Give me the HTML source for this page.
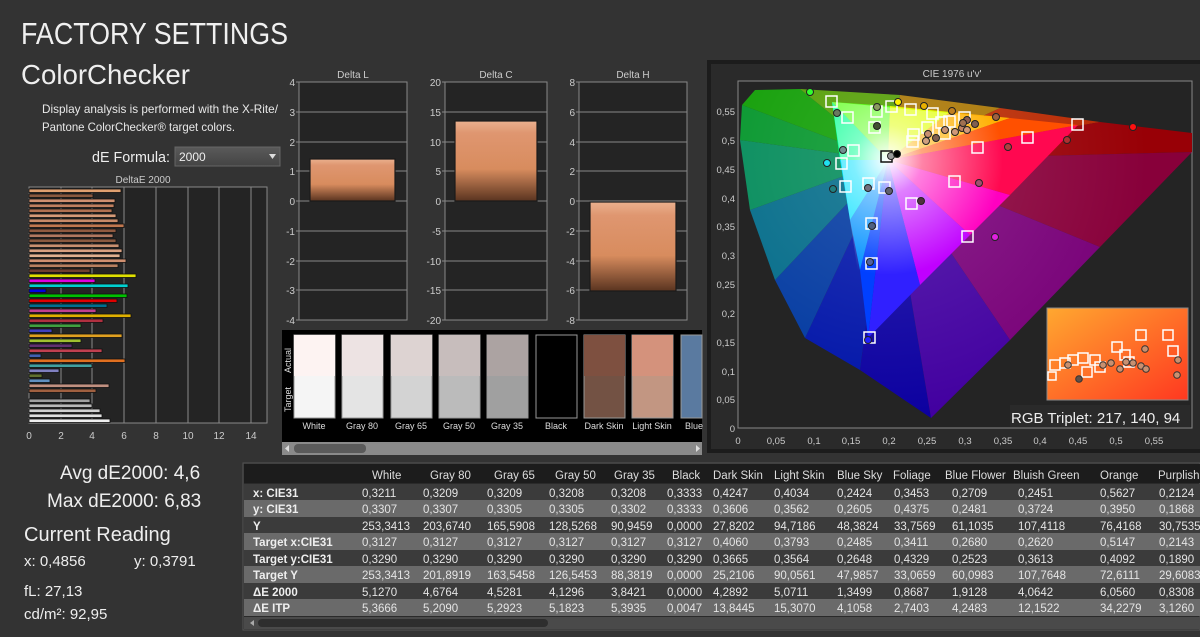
<!DOCTYPE html>
<html><head><meta charset="utf-8"><style>
html,body{margin:0;padding:0;background:#333;}
svg{display:block;}
text{font-family:"Liberation Sans",sans-serif;}
</style></head><body>
<svg width="1200" height="637" viewBox="0 0 1200 637" xmlns="http://www.w3.org/2000/svg">
<defs>
<radialGradient id="wr" gradientUnits="userSpaceOnUse" cx="888" cy="160" r="115">
<stop offset="0" stop-color="#fff" stop-opacity="1"/><stop offset="0.3" stop-color="#fff" stop-opacity="0.5"/><stop offset="1" stop-color="#fff" stop-opacity="0"/></radialGradient>
<radialGradient id="wo" gradientUnits="userSpaceOnUse" cx="888" cy="160" r="260">
<stop offset="0" stop-color="#fff" stop-opacity="0.15"/><stop offset="1" stop-color="#fff" stop-opacity="0"/></radialGradient>
<linearGradient id="bar" x1="0" y1="0" x2="0" y2="1"><stop offset="0" stop-color="#eab08e"/><stop offset="0.15" stop-color="#df9670"/><stop offset="0.6" stop-color="#d88c5e"/><stop offset="1" stop-color="#5a3420"/></linearGradient>
<linearGradient id="ins" x1="0" y1="0" x2="1" y2="1"><stop offset="0" stop-color="#ffa830"/><stop offset="1" stop-color="#ff3820"/></linearGradient>
<linearGradient id="sel" x1="0" y1="0" x2="0" y2="1"><stop offset="0" stop-color="#5a5a5a"/><stop offset="1" stop-color="#444"/></linearGradient>
</defs>
<rect width="1200" height="637" fill="#333"/>

<text x="21" y="44" font-size="31" fill="#f0f0f0" textLength="267" lengthAdjust="spacingAndGlyphs">FACTORY SETTINGS</text>
<text x="21" y="84" font-size="28" fill="#eee" textLength="169" lengthAdjust="spacingAndGlyphs">ColorChecker</text>
<text x="42" y="113" font-size="12" fill="#e8e8e8" textLength="236" lengthAdjust="spacingAndGlyphs">Display analysis is performed with the X-Rite/</text>
<text x="42" y="131" font-size="12" fill="#e8e8e8" textLength="193" lengthAdjust="spacingAndGlyphs">Pantone ColorChecker® target colors.</text>
<text x="92" y="162" font-size="15" fill="#eee" textLength="78" lengthAdjust="spacingAndGlyphs">dE Formula:</text>
<rect x="175" y="147" width="105" height="19" fill="url(#sel)" stroke="#666"/>
<text x="179" y="161" font-size="12" fill="#eee">2000</text>
<path d="M269 154 L276 154 L272.5 159 Z" fill="#ddd"/>

<text x="143" y="183" font-size="10" fill="#ccc" text-anchor="middle">DeltaE 2000</text>
<rect x="29" y="187" width="238" height="236" fill="#242424" stroke="#888"/>
<g stroke="#8a8a8a" stroke-width="1">
<line x1="61" y1="187" x2="61" y2="423"/><line x1="92" y1="187" x2="92" y2="423"/><line x1="124" y1="187" x2="124" y2="423"/><line x1="156" y1="187" x2="156" y2="423"/><line x1="188" y1="187" x2="188" y2="423"/><line x1="219" y1="187" x2="219" y2="423"/><line x1="251" y1="187" x2="251" y2="423"/>
</g>
<g font-size="10" fill="#ccc" text-anchor="middle">
<text x="29" y="439">0</text><text x="61" y="439">2</text><text x="92" y="439">4</text><text x="124" y="439">6</text><text x="156" y="439">8</text><text x="188" y="439">10</text><text x="219" y="439">12</text><text x="251" y="439">14</text></g>
<g stroke="#111" stroke-width="0.8">
<rect x="29" y="189" width="92" height="3.5" fill="#e0a070"/>
<rect x="29" y="194" width="64" height="3.5" fill="#8a5a40"/>
<rect x="29" y="199" width="86" height="3.5" fill="#d09070"/>
<rect x="29" y="204" width="85" height="3.5" fill="#c08060"/>
<rect x="29" y="209" width="83" height="3.5" fill="#b07050"/>
<rect x="29" y="214" width="87" height="3.5" fill="#d59a78"/>
<rect x="29" y="219" width="89" height="3.5" fill="#c88a68"/>
<rect x="29" y="224" width="95" height="3.5" fill="#c07850"/>
<rect x="29" y="229" width="87" height="3.5" fill="#905a40"/>
<rect x="29" y="234" width="84" height="3.5" fill="#b07860"/>
<rect x="29" y="239" width="87" height="3.5" fill="#8a5a40"/>
<rect x="29" y="244" width="90" height="3.5" fill="#c89070"/>
<rect x="29" y="249" width="93" height="3.5" fill="#d8a080"/>
<rect x="29" y="254" width="91" height="3.5" fill="#e0b090"/>
<rect x="29" y="259" width="97" height="3.5" fill="#d09070"/>
<rect x="29" y="264" width="89" height="3.5" fill="#b88060"/>
<rect x="29" y="269" width="61" height="3.5" fill="#704030"/>
<rect x="29" y="274" width="107" height="3.5" fill="#e0e000"/>
<rect x="29" y="279" width="66" height="3.5" fill="#e000e0"/>
<rect x="29" y="284" width="99" height="3.5" fill="#00d0d0"/>
<rect x="29" y="289" width="17" height="3.5" fill="#0000e0"/>
<rect x="29" y="294" width="98" height="3.5" fill="#00c000"/>
<rect x="29" y="299" width="88" height="3.5" fill="#e00000"/>
<rect x="29" y="304" width="78" height="3.5" fill="#007090"/>
<rect x="29" y="309" width="67" height="3.5" fill="#c04090"/>
<rect x="29" y="314" width="102" height="3.5" fill="#e0b000"/>
<rect x="29" y="319" width="74" height="3.5" fill="#b03040"/>
<rect x="29" y="324" width="52" height="3.5" fill="#40a040"/>
<rect x="29" y="329" width="23" height="3.5" fill="#4040c0"/>
<rect x="29" y="334" width="93" height="3.5" fill="#e0a020"/>
<rect x="29" y="339" width="52" height="3.5" fill="#a0c030"/>
<rect x="29" y="344" width="43" height="3.5" fill="#603070"/>
<rect x="29" y="349" width="73" height="3.5" fill="#c04050"/>
<rect x="29" y="354" width="12" height="3.5" fill="#4060b0"/>
<rect x="29" y="359" width="96" height="3.5" fill="#e07020"/>
<rect x="29" y="364" width="63" height="3.5" fill="#40a0a0"/>
<rect x="29" y="369" width="30" height="3.5" fill="#8080c0"/>
<rect x="29" y="374" width="13" height="3.5" fill="#607030"/>
<rect x="29" y="379" width="21" height="3.5" fill="#6090c0"/>
<rect x="29" y="384" width="80" height="3.5" fill="#c09080"/>
<rect x="29" y="389" width="67" height="3.5" fill="#a06040"/>
<rect x="29" y="399" width="61" height="3.5" fill="#a0a0a0"/>
<rect x="29" y="404" width="63" height="3.5" fill="#b8b8b8"/>
<rect x="29" y="409" width="71" height="3.5" fill="#d0d0d0"/>
<rect x="29" y="414" width="73" height="3.5" fill="#e0e0e0"/>
<rect x="29" y="419" width="81" height="3.5" fill="#f0f0f0"/>
</g>

<text x="60" y="479" font-size="19" fill="#eee">Avg dE2000: 4,6</text>
<text x="47" y="507" font-size="19" fill="#eee">Max dE2000: 6,83</text>
<text x="24" y="541" font-size="20" fill="#eee">Current Reading</text>
<text x="24" y="566" font-size="15" fill="#eee">x: 0,4856</text>
<text x="134" y="566" font-size="15" fill="#eee">y: 0,3791</text>
<text x="24" y="596" font-size="15" fill="#eee">fL: 27,13</text>
<text x="24" y="619" font-size="15" fill="#eee">cd/m²: 92,95</text>

<g font-size="10" fill="#ccc">
<text x="353" y="78" text-anchor="middle">Delta L</text>
<text x="496" y="78" text-anchor="middle">Delta C</text>
<text x="633" y="78" text-anchor="middle">Delta H</text>
</g>
<g fill="#242424" stroke="#888">
<rect x="299" y="82" width="108" height="238"/>
<rect x="445" y="82" width="102" height="238"/>
<rect x="579" y="82" width="108" height="238"/>
</g>
<g stroke="#888">
<path d="M296 112H407M296 142H407M296 171H407M296 201H407M296 231H407M296 261H407M296 290H407M296 82H299M296 320H299"/>
<path d="M442 112H547M442 142H547M442 171H547M442 201H547M442 231H547M442 261H547M442 290H547M442 82H445M442 320H445"/>
<path d="M576 112H687M576 142H687M576 171H687M576 201H687M576 231H687M576 261H687M576 290H687M576 82H579M576 320H579"/>
</g>
<g font-size="10" fill="#ccc" text-anchor="end">
<text x="295" y="86">4</text><text x="295" y="116">3</text><text x="295" y="146">2</text><text x="295" y="175">1</text><text x="295" y="205">0</text><text x="295" y="235">-1</text><text x="295" y="265">-2</text><text x="295" y="294">-3</text><text x="295" y="324">-4</text>
<text x="441" y="86">20</text><text x="441" y="116">15</text><text x="441" y="146">10</text><text x="441" y="175">5</text><text x="441" y="205">0</text><text x="441" y="235">-5</text><text x="441" y="265">-10</text><text x="441" y="294">-15</text><text x="441" y="324">-20</text>
<text x="575" y="86">8</text><text x="575" y="116">6</text><text x="575" y="146">4</text><text x="575" y="175">2</text><text x="575" y="205">0</text><text x="575" y="235">-2</text><text x="575" y="265">-4</text><text x="575" y="294">-6</text><text x="575" y="324">-8</text>
</g>
<g stroke="#1a1a1a" stroke-width="1.2" fill="url(#bar)">
<rect x="310" y="159" width="85" height="42"/>
<rect x="455" y="121" width="82" height="80"/>
<rect x="590" y="202" width="86" height="89"/>
</g>

<rect x="282" y="330" width="420" height="112" fill="#000"/>
<text transform="translate(291,373) rotate(-90)" font-size="9" fill="#ddd">Actual</text>
<text transform="translate(291,412) rotate(-90)" font-size="9" fill="#ddd">Target</text>
<g stroke="#999" stroke-width="1">
<rect x="294" y="335" width="41" height="83" fill="#f5f5f5"/><rect x="294" y="335" width="41" height="41" fill="#fdf3f2" stroke="none"/>
<rect x="342" y="335" width="41" height="83" fill="#e4e4e4"/><rect x="342" y="335" width="41" height="41" fill="#ede3e3" stroke="none"/>
<rect x="391" y="335" width="41" height="83" fill="#d3d3d3"/><rect x="391" y="335" width="41" height="41" fill="#ddd3d2" stroke="none"/>
<rect x="439" y="335" width="41" height="83" fill="#bbbbbb"/><rect x="439" y="335" width="41" height="41" fill="#c7bdbc" stroke="none"/>
<rect x="487" y="335" width="41" height="83" fill="#a0a0a0"/><rect x="487" y="335" width="41" height="41" fill="#aca3a2" stroke="none"/>
<rect x="536" y="335" width="41" height="83" fill="#000"/>
<rect x="584" y="335" width="41" height="83" fill="#735244"/><rect x="584" y="335" width="41" height="41" fill="#7e5040" stroke="none"/>
<rect x="632" y="335" width="41" height="83" fill="#c29682"/><rect x="632" y="335" width="41" height="41" fill="#d4927c" stroke="none"/>
<rect x="681" y="335" width="21" height="83" fill="#5a7aa0"/>
</g>
<g font-size="9" fill="#ddd" text-anchor="middle">
<text x="314" y="429">White</text><text x="362" y="429">Gray 80</text><text x="411" y="429">Gray 65</text><text x="459" y="429">Gray 50</text><text x="507" y="429">Gray 35</text><text x="556" y="429">Black</text><text x="604" y="429">Dark Skin</text><text x="652" y="429">Light Skin</text><text x="694" y="429">Blue</text>
</g>
<rect x="282" y="442" width="420" height="13" fill="#8a8a8a"/>
<rect x="294" y="444" width="72" height="9" rx="4" fill="#5a5a5a"/>
<path d="M289 445 L285 448.5 L289 452Z" fill="#ddd"/><path d="M696 445 L700 448.5 L696 452Z" fill="#ddd"/>

<rect x="707" y="60" width="493" height="393" fill="#1c1c1c"/>
<rect x="711" y="64" width="489" height="385" fill="#2a2a2a"/>
<text x="952" y="77" font-size="10" fill="#ccc" text-anchor="middle">CIE 1976 u'v'</text>
<rect x="738" y="81" width="454" height="347" fill="#242424" stroke="#888"/>
<g stroke="none">
<polygon points="888,160 931,418 860,370" fill="#0c00a0"/>
<polygon points="888,160 860,370 805,338" fill="#0014a8"/>
<polygon points="888,160 805,338 775,280" fill="#0038a0"/>
<polygon points="888,160 775,280 750,210" fill="#006a88"/>
<polygon points="888,160 750,210 740,140" fill="#008a58"/>
<polygon points="888,160 740,140 742,105" fill="#009428"/>
<polygon points="888,160 742,105 755,90 800,89" fill="#0c9c00"/>
<polygon points="888,160 800,89 900,95" fill="#509c00"/>
<polygon points="888,160 900,95 1000,108" fill="#a87400"/>
<polygon points="888,160 1000,108 1100,122" fill="#b82800"/>
<polygon points="888,160 1100,122 1192,133 1192,152" fill="#980006"/>
<polygon points="888,160 1192,152 1100,247" fill="#88003a"/>
<polygon points="888,160 1100,247 1010,340" fill="#780078"/>
<polygon points="888,160 1010,340 931,418" fill="#4200a0"/>
<polygon points="931,418 860,370 805,338 775,280 750,210 740,140 742,105 755,90 800,89 900,95 1000,108 1100,122 1192,133 1192,152 1100,247 1010,340" fill="url(#wo)"/>
</g>
<g stroke="none">
<polygon points="888,160 832,102 890,106" fill="#60ff20"/>
<polygon points="888,160 890,106 950,112" fill="#e0ff00"/>
<polygon points="888,160 950,112 1010,118" fill="#ffb000"/>
<polygon points="888,160 1010,118 1078,125" fill="#ff5000"/>
<polygon points="888,160 1078,125 1010,195" fill="#ff0850"/>
<polygon points="888,160 1010,195 970,235" fill="#ff00c0"/>
<polygon points="888,160 970,235 920,285" fill="#c000ff"/>
<polygon points="888,160 920,285 868,338" fill="#3020ff"/>
<polygon points="888,160 868,338 860,270" fill="#0040ff"/>
<polygon points="888,160 860,270 850,220" fill="#0090ff"/>
<polygon points="888,160 850,220 840,160" fill="#00e0ff"/>
<polygon points="888,160 840,160 832,102" fill="#00ff90"/>
<polygon points="832,102 1078,125 868,338" fill="url(#wr)"/>
</g>
<g fill="none" stroke="#fff" stroke-width="1.5">
<rect x="826" y="96" width="11" height="11"/><rect x="842" y="112" width="11" height="11"/><rect x="871" y="106" width="11" height="11"/><rect x="869" y="122" width="11" height="11"/><rect x="886" y="101" width="11" height="11"/><rect x="905" y="104" width="11" height="11"/><rect x="927" y="108" width="11" height="11"/><rect x="908" y="129" width="11" height="11"/><rect x="907" y="136" width="11" height="11"/><rect x="922" y="122" width="11" height="11"/><rect x="936" y="117" width="11" height="11"/><rect x="944" y="116" width="11" height="11"/><rect x="939" y="128" width="11" height="11"/><rect x="959" y="112" width="11" height="11"/><rect x="848" y="145" width="11" height="11"/><rect x="836" y="158" width="11" height="11"/><rect x="840" y="181" width="11" height="11"/><rect x="863" y="178" width="11" height="11"/><rect x="879" y="182" width="11" height="11"/><rect x="906" y="198" width="11" height="11"/><rect x="949" y="176" width="11" height="11"/><rect x="972" y="142" width="11" height="11"/><rect x="1022" y="132" width="11" height="11"/><rect x="1072" y="119" width="11" height="11"/><rect x="866" y="218" width="11" height="11"/><rect x="866" y="258" width="11" height="11"/><rect x="864" y="332" width="11" height="11"/><rect x="962" y="231" width="11" height="11"/>
<rect x="881" y="151" width="11" height="11" stroke="#111"/>
</g>
<g stroke="#222" stroke-width="1">
<circle cx="810" cy="92" r="3.5" fill="#30ff30"/><circle cx="837" cy="113" r="3.5" fill="#6a7a60"/><circle cx="877" cy="107" r="3.5" fill="#8a9a60"/><circle cx="898" cy="102" r="3.5" fill="#ffee00"/><circle cx="924" cy="106" r="3.5" fill="#e8b000"/><circle cx="952" cy="111" r="3.5" fill="#c08020"/><circle cx="877" cy="126" r="3.5" fill="#405030"/><circle cx="891" cy="156" r="3.5" fill="#999"/><circle cx="897" cy="154" r="3.5" fill="#000"/><circle cx="843" cy="150" r="3.5" fill="#709090"/><circle cx="827" cy="163" r="3.5" fill="#20e0f0"/><circle cx="833" cy="189" r="3.5" fill="#208080"/><circle cx="868" cy="188" r="3.5" fill="#707080"/><circle cx="889" cy="191" r="3.5" fill="#606070"/><circle cx="921" cy="201" r="3.5" fill="#503040"/><circle cx="979" cy="183" r="3.5" fill="#a05070"/><circle cx="1008" cy="147" r="3.5" fill="#b04040"/><circle cx="1067" cy="140" r="3.5" fill="#b03030"/><circle cx="1133" cy="127" r="3.5" fill="#ff1010"/><circle cx="996" cy="117" r="3.5" fill="#a06040"/><circle cx="995" cy="237" r="3.5" fill="#e020e0"/><circle cx="872" cy="226" r="3.5" fill="#506080"/><circle cx="870" cy="262" r="3.5" fill="#5060a0"/><circle cx="868" cy="340" r="3.5" fill="#2020ff"/>
<circle cx="936" cy="138" r="3.5" fill="#806050"/><circle cx="926" cy="141" r="3.5" fill="#d0a080"/><circle cx="928" cy="134" r="3.5" fill="#c89070"/><circle cx="945" cy="130" r="3.5" fill="#c89070"/><circle cx="955" cy="132" r="3.5" fill="#d09878"/><circle cx="962" cy="128" r="3.5" fill="#c08060"/><circle cx="967" cy="130" r="3.5" fill="#d09878"/><circle cx="975" cy="124" r="3.5" fill="#806050"/><circle cx="967" cy="120" r="3.5" fill="#906050"/><circle cx="963" cy="123" r="3.5" fill="#a07050"/>
</g>
<rect x="1047" y="308" width="141" height="92" fill="url(#ins)" stroke="#888"/>
<g fill="none" stroke="#fff" stroke-width="1.5">
<rect x="1050" y="360" width="10" height="10"/><rect x="1060" y="358" width="10" height="10"/><rect x="1068" y="355" width="10" height="10"/><rect x="1078" y="353" width="10" height="10"/><rect x="1090" y="355" width="10" height="10"/><rect x="1095" y="362" width="10" height="10"/><rect x="1082" y="367" width="10" height="10"/><rect x="1112" y="342" width="10" height="10"/><rect x="1120" y="350" width="10" height="10"/><rect x="1124" y="357" width="10" height="10"/><rect x="1136" y="330" width="10" height="10"/><rect x="1163" y="330" width="10" height="10"/><rect x="1168" y="346" width="10" height="10"/><rect x="1048" y="372" width="8" height="8"/>
</g>
<g stroke="#333" stroke-width="1" fill="#c89070">
<circle cx="1068" cy="365" r="3.3"/><circle cx="1079" cy="379" r="3.3" fill="#605048"/><circle cx="1103" cy="365" r="3.3"/><circle cx="1111" cy="363" r="3.3"/><circle cx="1120" cy="369" r="3.3"/><circle cx="1126" cy="362" r="3.3"/><circle cx="1133" cy="363" r="3.3"/><circle cx="1141" cy="366" r="3.3"/><circle cx="1146" cy="369" r="3.3"/><circle cx="1145" cy="349" r="3.3"/><circle cx="1178" cy="360" r="3.3"/><circle cx="1177" cy="375" r="3.3"/></g>
<rect x="1010" y="405" width="180" height="22" fill="#2a2a2a"/>
<text x="1011" y="423" font-size="15" fill="#eee">RGB Triplet: 217, 140, 94</text>
<g font-size="9.5" fill="#ccc" text-anchor="end">
<text x="735" y="115">0,55</text><text x="735" y="144">0,5</text><text x="735" y="173">0,45</text><text x="735" y="202">0,4</text><text x="735" y="230">0,35</text><text x="735" y="259">0,3</text><text x="735" y="288">0,25</text><text x="735" y="317">0,2</text><text x="735" y="346">0,15</text><text x="735" y="375">0,1</text><text x="735" y="403">0,05</text><text x="735" y="432">0</text>
</g>
<g font-size="9.5" fill="#ccc" text-anchor="middle">
<text x="738" y="444">0</text><text x="776" y="444">0,05</text><text x="814" y="444">0,1</text><text x="851" y="444">0,15</text><text x="889" y="444">0,2</text><text x="927" y="444">0,25</text><text x="965" y="444">0,3</text><text x="1003" y="444">0,35</text><text x="1040" y="444">0,4</text><text x="1078" y="444">0,45</text><text x="1116" y="444">0,5</text><text x="1154" y="444">0,55</text>
</g>

<rect x="243" y="463" width="957" height="167" fill="#2a2a2a" stroke="#555"/>
<rect x="244" y="464" width="956" height="19" fill="#1c1c1c"/>
<g fill="#3b3b3b"><rect x="244" y="484" width="956" height="16"/><rect x="244" y="517" width="956" height="16"/><rect x="244" y="550" width="956" height="16"/><rect x="244" y="583" width="956" height="16"/></g>
<g fill="#6a6a6a"><rect x="244" y="500" width="956" height="17"/><rect x="244" y="533" width="956" height="17"/><rect x="244" y="566" width="956" height="17"/><rect x="244" y="599" width="956" height="17"/></g>
<rect x="244" y="617" width="956" height="12" fill="#4a4a4a"/>
<rect x="258" y="619" width="290" height="8" rx="4" fill="#2e2e2e"/>
<path d="M254 620 L250 623 L254 626Z" fill="#aaa"/>
<g font-size="11.5" fill="#ddd">
<text x="372" y="479">White</text><text x="430" y="479">Gray 80</text><text x="494" y="479">Gray 65</text><text x="555" y="479">Gray 50</text><text x="614" y="479">Gray 35</text><text x="672" y="479">Black</text><text x="713" y="479">Dark Skin</text><text x="774" y="479">Light Skin</text><text x="837" y="479">Blue Sky</text><text x="893" y="479">Foliage</text><text x="945" y="479">Blue Flower</text><text x="1013" y="479">Bluish Green</text><text x="1100" y="479">Orange</text><text x="1158" y="479">Purplish</text>
</g>
<g font-size="11.5" fill="#eee" font-weight="bold">
<text x="253" y="497">x: CIE31</text><text x="253" y="513">y: CIE31</text><text x="253" y="530">Y</text><text x="253" y="546">Target x:CIE31</text><text x="253" y="563">Target y:CIE31</text><text x="253" y="579">Target Y</text><text x="253" y="596">ΔE 2000</text><text x="253" y="612">ΔE ITP</text>
</g>
<g font-size="11.5" fill="#e4e4e4">
<text y="497"><tspan x="362">0,3211</tspan><tspan x="423">0,3209</tspan><tspan x="487">0,3209</tspan><tspan x="549">0,3208</tspan><tspan x="611">0,3208</tspan><tspan x="667">0,3333</tspan><tspan x="713">0,4247</tspan><tspan x="774">0,4034</tspan><tspan x="837">0,2424</tspan><tspan x="894">0,3453</tspan><tspan x="952">0,2709</tspan><tspan x="1018">0,2451</tspan><tspan x="1100">0,5627</tspan><tspan x="1159">0,2124</tspan></text>
<text y="513"><tspan x="362">0,3307</tspan><tspan x="423">0,3307</tspan><tspan x="487">0,3305</tspan><tspan x="549">0,3305</tspan><tspan x="611">0,3302</tspan><tspan x="667">0,3333</tspan><tspan x="713">0,3606</tspan><tspan x="774">0,3562</tspan><tspan x="837">0,2605</tspan><tspan x="894">0,4375</tspan><tspan x="952">0,2481</tspan><tspan x="1018">0,3724</tspan><tspan x="1100">0,3950</tspan><tspan x="1159">0,1868</tspan></text>
<text y="530"><tspan x="362">253,3413</tspan><tspan x="423">203,6740</tspan><tspan x="487">165,5908</tspan><tspan x="549">128,5268</tspan><tspan x="611">90,9459</tspan><tspan x="667">0,0000</tspan><tspan x="713">27,8202</tspan><tspan x="774">94,7186</tspan><tspan x="837">48,3824</tspan><tspan x="894">33,7569</tspan><tspan x="952">61,1035</tspan><tspan x="1018">107,4118</tspan><tspan x="1100">76,4168</tspan><tspan x="1159">30,7535</tspan></text>
<text y="546"><tspan x="362">0,3127</tspan><tspan x="423">0,3127</tspan><tspan x="487">0,3127</tspan><tspan x="549">0,3127</tspan><tspan x="611">0,3127</tspan><tspan x="667">0,3127</tspan><tspan x="713">0,4060</tspan><tspan x="774">0,3793</tspan><tspan x="837">0,2485</tspan><tspan x="894">0,3411</tspan><tspan x="952">0,2680</tspan><tspan x="1018">0,2620</tspan><tspan x="1100">0,5147</tspan><tspan x="1159">0,2143</tspan></text>
<text y="563"><tspan x="362">0,3290</tspan><tspan x="423">0,3290</tspan><tspan x="487">0,3290</tspan><tspan x="549">0,3290</tspan><tspan x="611">0,3290</tspan><tspan x="667">0,3290</tspan><tspan x="713">0,3665</tspan><tspan x="774">0,3564</tspan><tspan x="837">0,2648</tspan><tspan x="894">0,4329</tspan><tspan x="952">0,2523</tspan><tspan x="1018">0,3613</tspan><tspan x="1100">0,4092</tspan><tspan x="1159">0,1890</tspan></text>
<text y="579"><tspan x="362">253,3413</tspan><tspan x="423">201,8919</tspan><tspan x="487">163,5458</tspan><tspan x="549">126,5453</tspan><tspan x="611">88,3819</tspan><tspan x="667">0,0000</tspan><tspan x="713">25,2106</tspan><tspan x="774">90,0561</tspan><tspan x="837">47,9857</tspan><tspan x="894">33,0659</tspan><tspan x="952">60,0983</tspan><tspan x="1018">107,7648</tspan><tspan x="1100">72,6111</tspan><tspan x="1159">29,6083</tspan></text>
<text y="596"><tspan x="362">5,1270</tspan><tspan x="423">4,6764</tspan><tspan x="487">4,5281</tspan><tspan x="549">4,1296</tspan><tspan x="611">3,8421</tspan><tspan x="667">0,0000</tspan><tspan x="713">4,2892</tspan><tspan x="774">5,0711</tspan><tspan x="837">1,3499</tspan><tspan x="894">0,8687</tspan><tspan x="952">1,9128</tspan><tspan x="1018">4,0642</tspan><tspan x="1100">6,0560</tspan><tspan x="1159">0,8308</tspan></text>
<text y="612"><tspan x="362">5,3666</tspan><tspan x="423">5,2090</tspan><tspan x="487">5,2923</tspan><tspan x="549">5,1823</tspan><tspan x="611">5,3935</tspan><tspan x="667">0,0047</tspan><tspan x="713">13,8445</tspan><tspan x="774">15,3070</tspan><tspan x="837">4,1058</tspan><tspan x="894">2,7403</tspan><tspan x="952">4,2483</tspan><tspan x="1018">12,1522</tspan><tspan x="1100">34,2279</tspan><tspan x="1159">3,1260</tspan></text>
</g>
</svg>
</body></html>
